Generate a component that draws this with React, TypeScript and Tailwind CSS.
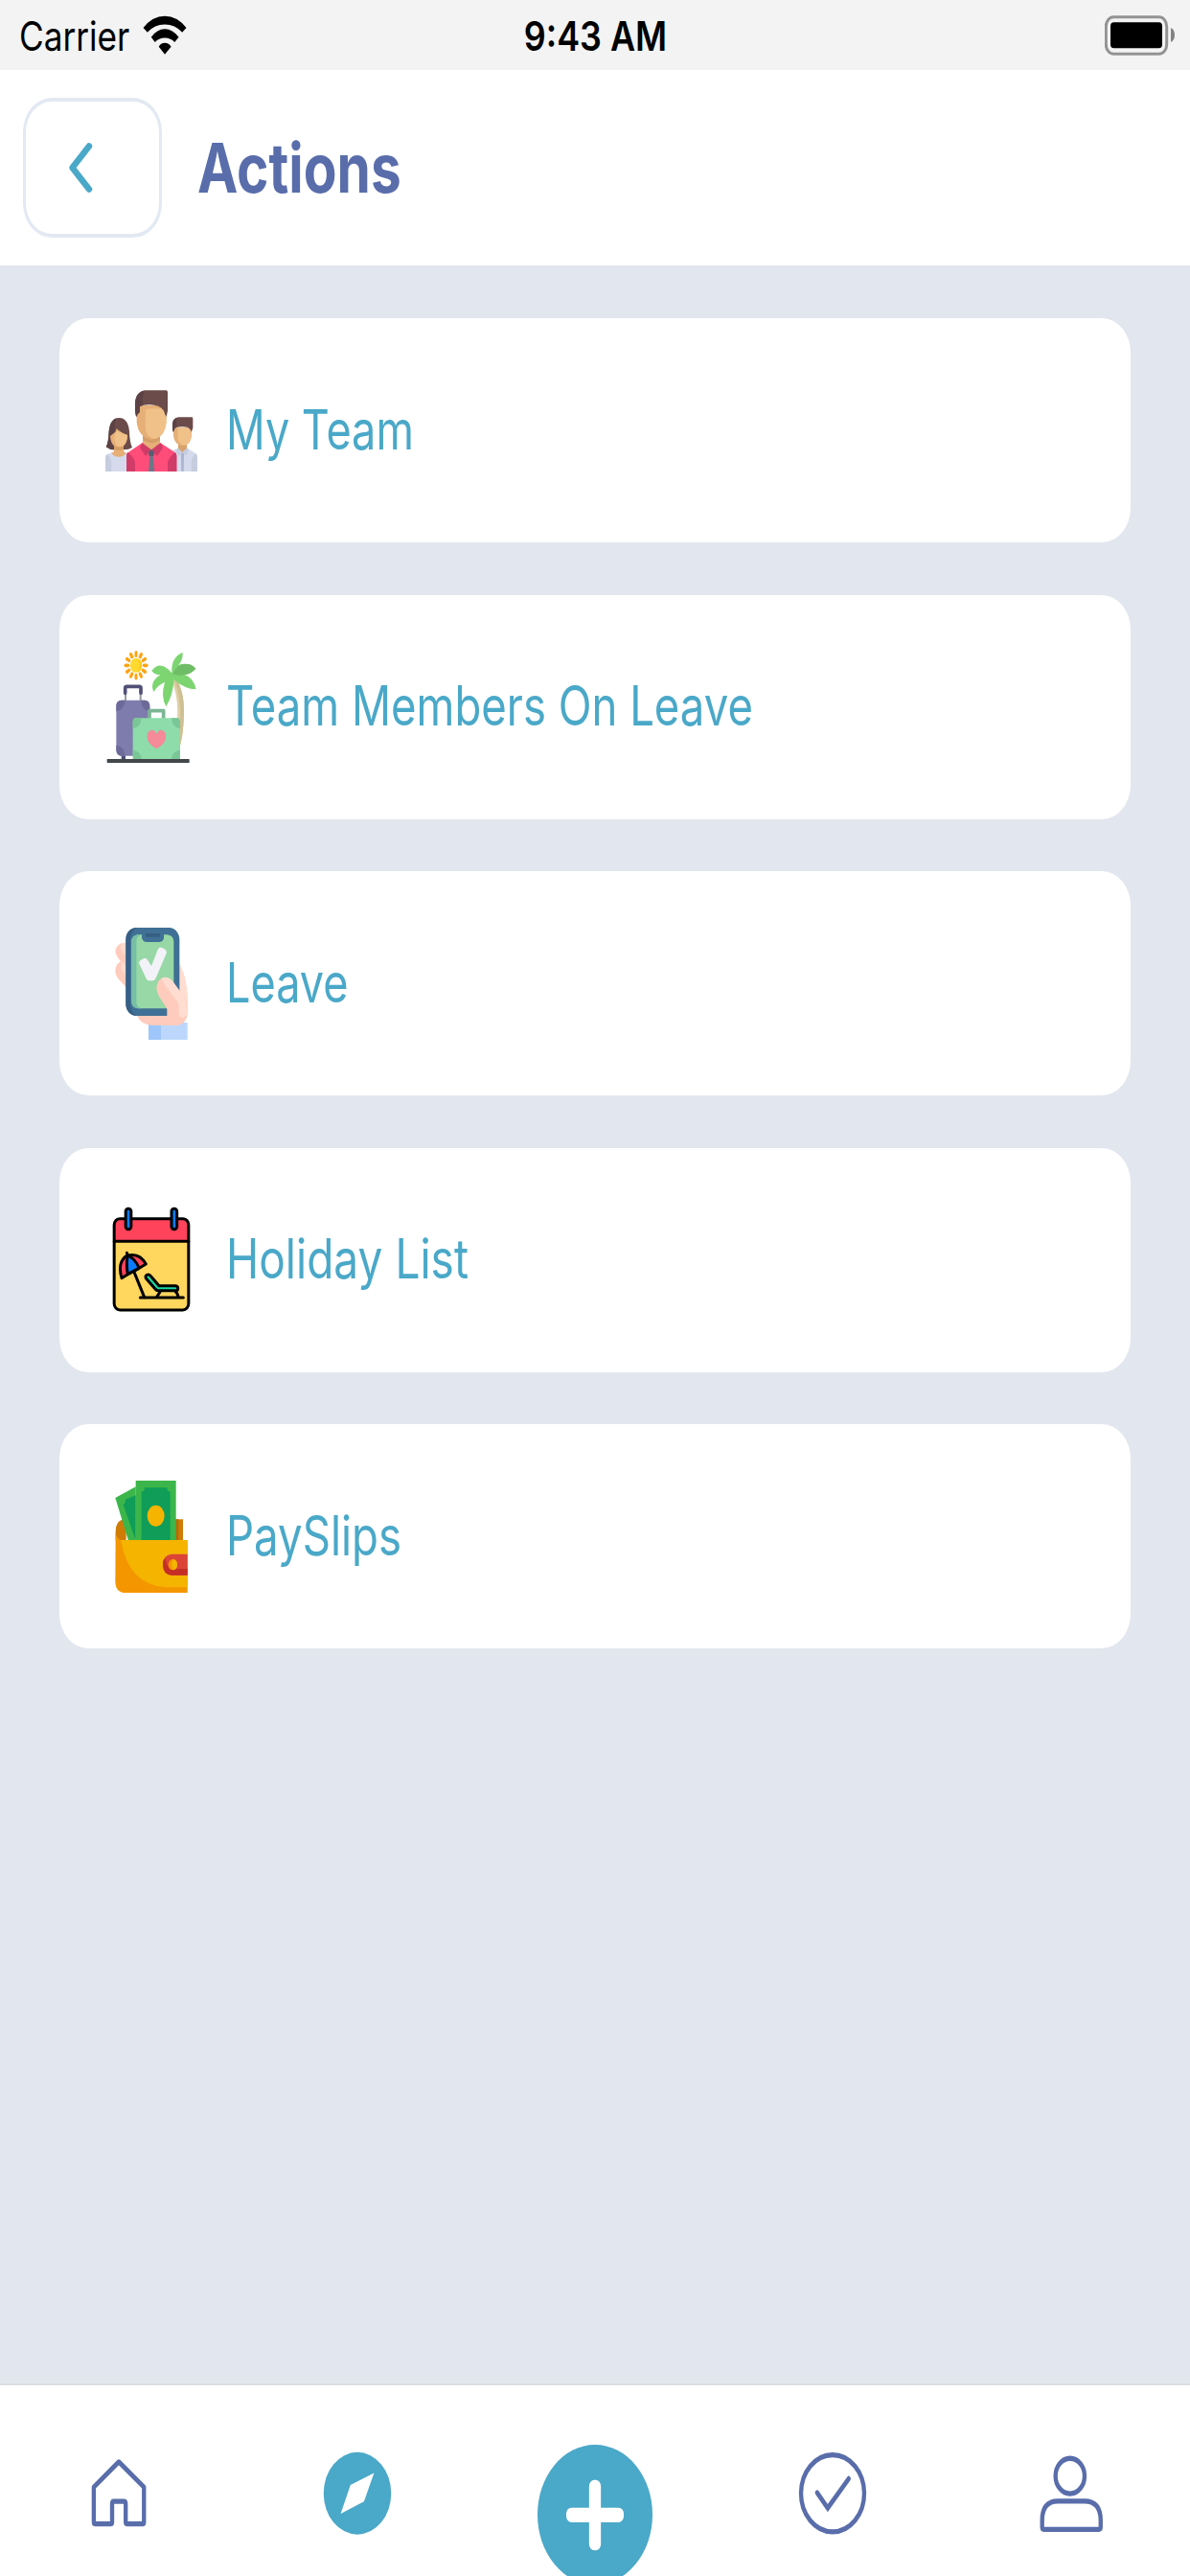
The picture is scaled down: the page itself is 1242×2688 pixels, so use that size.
import type { ReactNode } from 'react'

interface ActionItem {
  label: string
  icon: ReactNode
  labelClass: string
}

function WifiIcon() {
  return (
    <svg viewBox="447 45 138 124" className="h-[41px] w-[46px]" fill="#000">
      <path d="M448 84Q477 47 516 47T584 84L571 99Q548 74 516 74T461 99Z" />
      <path d="M473 114Q491 88 516 88T560 114L547 130Q535 116 516 116T485 130Z" />
      <path d="M497 144Q503 132 516 132T536 144L516 168Z" />
    </svg>
  )
}

function BatteryIcon() {
  return (
    <svg viewBox="0 0 74 42" className="h-[42px] w-[74px]">
      <rect x="1.3" y="1.7" width="63.4" height="38.6" rx="8" ry="10" fill="none" stroke="#939393" strokeWidth="3" />
      <rect x="6" y="7.3" width="54" height="27" rx="3.5" ry="4" fill="#000" />
      <path d="M69 13Q73 15 73 20.5T69 28Z" fill="#828282" />
    </svg>
  )
}

function TeamIcon() {
  return (
    <svg viewBox="180 212 288 351" className="h-[117px] w-24">
      {/* woman on the left */}
      <path d="M182 438Q190 424 191 388Q196 347 223 347Q250 347 255 388Q256 424 264 440Q251 448 237 447H208Q193 447 182 438Z" fill="#6b4c4a" />
      <path d="M182 438Q190 424 191 388Q195 354 215 348Q207 366 209 388L207 447Q193 447 182 438Z" fill="#5c4145" />
      <path d="M180 515V472Q181 462 190 459L207 454H240L262 462V515Z" fill="#d5dbed" />
      <path d="M180 515V472Q181 464 186 461Q199 474 199 492V515Z" fill="#c5cddf" />
      <path d="M207 430H237V452L245 458Q237 469 222 469T199 458L207 452Z" fill="#e5af77" />
      <path d="M207 430H237V445Q222 452 207 445Z" fill="#d59d67" />
      <path d="M195 404L210 392Q214 387 215 380Q226 392 249 401Q249 424 238 434Q222 444 206 434Q196 424 195 404Z" fill="#e5af77" />
      <path d="M208 408Q208 396 218 388Q230 395 249 401Q248 425 236 434Q224 440 215 433Q208 424 208 408Z" fill="#f0c188" />
      {/* man on the right */}
      <path d="M385 515V452L407 442H436L459 456Q468 462 468 472V515Z" fill="#d5dbed" />
      <path d="M449 515V487Q450 468 463 459Q468 464 468 472V515Z" fill="#c5cddf" />
      <path d="M408 425H435V445L421 456L408 445Z" fill="#d9a26c" />
      <path d="M407 441L421 455L410 466L400 452ZM436 441L421 455L432 466L441 449Z" fill="#c5cddf" />
      <path d="M417 458H426V467L425 515H418L417 467Z" fill="#a9b4d2" />
      <path d="M393 378H450V404Q446 433 422 435Q397 433 393 404Z" fill="#e5af77" />
      <path d="M407 378H449V405Q446 431 427 433Q409 431 407 410Z" fill="#f0c188" />
      <path d="M393 392Q389 384 390 367Q391 347 409 345H451Q454 345 454 350V379L449 392Q448 381 436 376Q418 372 400 378Q395 382 393 392Z" fill="#6b4c4a" />
      <path d="M393 392Q389 384 390 367Q391 351 403 347L402 375Q395 382 393 392Z" fill="#5c4145" />
      {/* man in the middle */}
      <path d="M246 515V465Q247 456 257 451L295 426H353L392 451Q402 456 403 465V515Z" fill="#ff4d7a" />
      <path d="M246 515V465Q247 456 251 455Q273 474 273 489V515ZM403 515V465Q402 458 398 455Q375 474 375 489V515Z" fill="#d13b68" />
      <path d="M297 400H351V431L324 450L297 431Z" fill="#e5af77" />
      <path d="M297 400H351V417Q325 434 297 417Z" fill="#d59d67" />
      <path d="M295 425L324 447L306 467L288 441ZM353 425L324 447L342 467L360 441Z" fill="#d13b68" />
      <path d="M324 446L332 454V464L329 467L334 515H315L319 467L316 463V454Z" fill="#6e7688" />
      <path d="M324 446L332 454V464L329 467H319L316 463V454Z" fill="#565d70" />
      <path d="M278 308H371V360Q366 410 325 415Q283 409 278 360Z" fill="#e5af77" />
      <path d="M305 325Q307 318 325 318H366L371 345Q371 407 333 413Q305 407 305 375Z" fill="#f0c188" />
      <path d="M277 344Q272 332 273 308Q272 266 305 261H370Q375 261 375 267V325L371 344Q366 337 363 325Q350 306 318 306Q298 306 288 312V328Q281 333 277 344Z" fill="#6b4c4a" />
      <path d="M277 344Q272 332 273 308Q272 266 303 262Q293 283 298 305L288 312V328Q281 333 277 344Z" fill="#5c4145" />
    </svg>
  )
}

const SUN_RAYS = [0, 30, 60, 90, 120, 150, 180, 210, 240, 270, 300, 330]

function VacationIcon() {
  return (
    <svg viewBox="60 58 288 351" className="h-[117px] w-24">
      <g transform="translate(156 104) scale(1 1.22)">
        {SUN_RAYS.map((deg) => (
          <path key={deg} d="M0 -25V-33" transform={`rotate(${deg})`} stroke="#fca311" strokeWidth="9" strokeLinecap="round" />
        ))}
        <circle r="18.5" fill="#ffd92e" />
        <path d="M6 -17.5A18.5 18.5 0 0 1 6 17.5Q15 0 6 -17.5Z" fill="#fccb22" />
      </g>
      {/* palm */}
      <path d="M268 150L282 146Q306 185 306 245Q306 310 294 355L282 300Q294 215 268 150Z" fill="#dfd0a5" />
      <path d="M277 150L282 146Q306 185 306 245Q306 310 294 355L291 330Q303 220 277 150Z" fill="#cfc093" />
      <path d="M268 128Q265 78 302 63Q303 88 289 103Q314 92 343 114Q329 131 308 133Q337 143 344 179Q310 179 275 149Q271 200 250 233Q232 200 246 157Q226 164 211 187Q197 155 232 134Q215 134 205 121Q232 85 268 128Z" fill="#7dd572" />
      <path d="M271 130Q288 91 325 101Q336 105 343 114Q326 131 307 133Q289 140 271 130Z" fill="#70bd67" />
      {/* suitcases */}
      <path d="M123 193V215M170 193V215" stroke="#9a9a9a" strokeWidth="6" />
      <path d="M122 191V175Q122 170 127 170H166Q171 170 171 175V191" fill="none" stroke="#515078" strokeWidth="11" strokeLinecap="round" strokeLinejoin="round" />
      <rect x="110" y="380" width="13" height="18" fill="#515078" />
      <rect x="94" y="213" width="105" height="174" rx="16" ry="19" fill="#7e7cad" />
      <path d="M94 248V232Q94 213 110 213H122Q120 243 94 248ZM171 213H183Q199 213 199 232V248Q174 244 171 213ZM94 354Q119 357 122 387H110Q94 387 94 368Z" fill="#6c6a99" />
      <path d="M198 270V246H242V270" fill="none" stroke="#7bb594" strokeWidth="11" strokeLinejoin="round" />
      <rect x="146" y="269" width="148" height="129" rx="10" ry="12" fill="#8ddcaa" />
      <path d="M146 302V281Q146 269 156 269H173Q171 298 146 302ZM267 269H284Q294 269 294 281V302Q269 299 267 269ZM146 369Q172 373 173 398H146ZM294 369V398H267Q268 373 294 369Z" fill="#7bc697" />
      <path d="M220 318Q212 302 200 308Q190 313 191 329Q192 350 220 365Q248 350 249 329Q250 313 240 308Q228 302 220 318Z" fill="#f58a99" />
      <rect x="65" y="397" width="258" height="12" rx="2" fill="#42474a" />
    </svg>
  )
}

function PhoneIcon() {
  return (
    <svg viewBox="60 53 288 351" className="h-[117px] w-24">
      <rect x="195" y="350" width="122" height="55" fill="#bcd7fb" />
      <rect x="195" y="350" width="39" height="55" fill="#9fc6fb" />
      <path d="M125 103Q113 97 101 107Q87 119 94 138Q98 148 108 159Q90 169 91 190Q92 203 102 215L125 240Z" fill="#ffcbbd" />
      <path d="M113 100Q103 107 107 120Q113 133 125 141V103ZM113 160Q104 172 111 186L125 206V170Z" fill="#ffd9cc" />
      <path d="M158 325Q170 358 210 359H285Q317 353 317 315V280Q316 210 292 168V325Z" fill="#ffcbbd" />
      <path d="M292 168Q316 210 317 290L292 260Z" fill="#ffddd0" />
      <rect x="124" y="53" width="168" height="276" rx="32" ry="38" fill="#407095" />
      <path d="M158 53Q124 57 124 91V291Q124 325 158 329Q138 318 138 288V94Q138 64 158 53Z" fill="#365f83" />
      <path d="M162 75H174V84Q176 98 190 98H229Q243 96 243 84V75H253Q274 77 274 98V306H162Q142 304 142 284V97Q142 77 162 75Z" fill="#97d8a6" />
      <path d="M162 75H174Q157 78 157 98V284Q157 304 174 306H162Q142 304 142 284V97Q142 77 162 75Z" fill="#77bea6" />
      <rect x="186" y="71" width="45" height="11" rx="4" fill="#365f83" />
      <path d="M166 166Q164 159 170 155L181 149Q187 147 191 153L204 173L225 120Q229 112 236 115L247 121Q253 125 251 133L217 213Q215 218 209 219H196Q191 219 188 213Z" fill="#f3f2f8" />
      <path d="M253 359V307L228 268Q213 241 226 221Q245 197 269 219L302 264Q317 290 317 319Q313 353 285 359Z" fill="#ffcbbd" />
      <path d="M236 212Q254 202 269 219L302 264Q317 290 317 319Q311 335 300 334Q287 332 290 304Q291 291 280 277L253 243Q243 228 236 212Z" fill="#ffddd0" />
    </svg>
  )
}

function HolidayIcon() {
  return (
    <svg viewBox="60 49 288 351" className="h-[117px] w-24">
      <rect x="87.500" y="96" width="233" height="286" rx="18" ry="20" fill="#ffd65e" />
      <path d="M87.500 167V116Q87.500 96 106 96H302Q320.500 96 320.500 116V167Z" fill="#ff435b" />
      <g fill="none" stroke="#000" strokeWidth="9" strokeLinecap="round" strokeLinejoin="round">
        <rect x="87.500" y="96" width="233" height="286" rx="18" ry="20" />
        <path d="M88 167H320" />
        <rect x="123.500" y="65" width="17" height="64" rx="8" fill="#0a7cff" />
        <rect x="267" y="65" width="17" height="64" rx="8" fill="#0a7cff" />
        <path d="M150 263L182 342" />
        <path d="M111 282Q102 251 110 232Q119 214 130 211Q167 202 187 238L157 256L130 270Z" fill="#ff435b" />
        <path d="M130 211Q155 222 165 251L130 270Q124 237 130 211Z" fill="#0a7cff" />
        <path d="M130 211L127 203" />
        <path d="M190 272Q198 269 203 277L228 306H280Q288 307 287 315Q287 321 280 321H225Q220 321 216 316L188 284Q183 276 190 272Z" fill="#19d9a3" />
        <path d="M231 325L221 341M279 324Q287 330 288 341" />
        <path d="M169 343H304" />
      </g>
    </svg>
  )
}

function WalletIcon() {
  return (
    <svg viewBox="60 44 288 351" className="h-[117px] w-24">
      <path d="M92 205Q92 165 125 165V232H92Z" fill="#cf7c06" />
      <rect x="278" y="165" width="25" height="68" fill="#cf7c06" />
      <rect x="278" y="165" width="11" height="68" fill="#b56a05" />
      <path d="M91 98L155 63V232H132Z" fill="#3cb64a" />
      <path d="M116 119Q125 113 122 103L155 90V232Z" fill="#0f9d58" />
      <rect x="155" y="44" width="126" height="189" fill="#3cb64a" />
      <path d="M173 79Q183 77 183 66H253Q253 77 263 79V233H173Z" fill="#0f9d58" />
      <ellipse cx="218" cy="154" rx="27" ry="33" fill="#f4b400" />
      <path d="M92 205Q97 231 115 232H317V395H123Q91 395 91 358Z" fill="#f39600" />
      <path d="M108 230H317V378H248Q132 370 108 230Z" fill="#f4b400" />
      <path d="M317 274V340H268Q240 337 240 307Q240 277 268 274Z" fill="#db4437" />
      <path d="M240 300V307Q240 337 268 340H317V320H278Q249 320 248 287Q240 292 240 300Z" fill="#c42e25" />
      <ellipse cx="271" cy="307" rx="14" ry="17" fill="#f39600" />
      <path d="M272 290Q285 292 285 307T272 324Q263 307 272 290Z" fill="#f4b400" />
    </svg>
  )
}

const ACTIONS: ActionItem[] = [
  { label: 'My Team', icon: <TeamIcon />, labelClass: 'scale-x-[0.79]' },
  { label: 'Team Members On Leave', icon: <VacationIcon />, labelClass: 'scale-x-[0.798]' },
  { label: 'Leave', icon: <PhoneIcon />, labelClass: 'scale-x-[0.79]' },
  { label: 'Holiday List', icon: <HolidayIcon />, labelClass: 'scale-x-[0.808]' },
  { label: 'PaySlips', icon: <WalletIcon />, labelClass: 'scale-x-[0.8]' },
]

function StatusBar() {
  return (
    <div className="grid h-[73px] grid-cols-3 items-center bg-[#f3f3f3] text-[42.500px] leading-none text-black">
      <div className="flex items-center pl-5">
        <span className="w-[129px] origin-left scale-x-[0.828] pt-[3px] whitespace-nowrap">Carrier</span>
        <WifiIcon />
      </div>
      <div className="flex justify-center">
        <span className="scale-x-[0.845] pt-[3px] font-semibold whitespace-nowrap">9:43 AM</span>
      </div>
      <div className="flex justify-end pr-[15px]">
        <BatteryIcon />
      </div>
    </div>
  )
}

function Header() {
  return (
    <header className="flex h-[204px] items-center bg-white pl-6">
      <button
        type="button"
        aria-label="Back"
        className="flex h-[146px] w-[145px] items-center rounded-[30px/36px] border-x-[3px] border-y-4 border-[#e3e9f2] pl-[43px]"
      >
        <svg viewBox="0 0 28 56" className="h-14 w-7" fill="none" stroke="#4aa8c8" strokeWidth="6.500" strokeLinecap="round" strokeLinejoin="round">
          <path d="M23 5.500L5.500 28L23 50.500" />
        </svg>
      </button>
      <h1 className="ml-[37px] origin-left scale-x-[0.8] text-[71px] leading-none font-bold whitespace-nowrap text-[#596dab]">
        Actions
      </h1>
    </header>
  )
}

function ActionCard({ label, icon, labelClass }: ActionItem) {
  return (
    <button type="button" className="flex h-[234px] items-center rounded-[30px/36px] bg-white pl-12">
      {icon}
      <span
        className={`ml-[30px] origin-left pb-0.5 text-[57px] leading-none whitespace-nowrap text-[#4aa8c8] ${labelClass}`}
      >
        {label}
      </span>
    </button>
  )
}

function TabIcon({ children }: { children: ReactNode }) {
  return (
    <svg
      viewBox="0 0 30 30"
      preserveAspectRatio="none"
      className="mt-[58px] h-[109.500px] w-[90px]"
      fill="none"
      stroke="#596dab"
      strokeWidth="1.450"
      strokeLinecap="round"
      strokeLinejoin="round"
    >
      {children}
    </svg>
  )
}

function TabBar() {
  return (
    <nav className="grid h-[201px] grid-cols-5 justify-items-center overflow-hidden border-t-2 border-[#dcdfe2] bg-white">
      <TabIcon>
        <path d="M6.300 13.200L15 6L23.750 13.200V23.200Q23.750 23.750 23.200 23.750H18Q17.400 23.750 17.400 23.200V18Q17.400 17.300 16.800 17.300H13.200Q12.670 17.300 12.670 18V23.200Q12.670 23.750 12.100 23.750H6.900Q6.300 23.750 6.300 23.200Z" />
      </TabIcon>
      <TabIcon>
        <circle cx="15" cy="15" r="11.750" fill="#4aa8c8" stroke="none" />
        <path d="M20.800 9.200L12.600 12.600L9.200 20.800L17.300 17.300Z" fill="#fff" stroke="none" />
      </TabIcon>
      <svg viewBox="0 0 40 40" preserveAspectRatio="none" className="mt-[62px] h-[146px] w-[120px]">
        <circle cx="20" cy="20" r="20" fill="#4aa8c8" />
        <rect x="10" y="18" width="20" height="4.200" rx="1.800" fill="#fff" />
        <rect x="17.950" y="10.100" width="4.100" height="20.100" rx="1.800" fill="#fff" />
      </svg>
      <TabIcon>
        <circle cx="15" cy="15" r="11" />
        <path d="M9.600 14.800L13.300 19.200L20.600 10.800" strokeLinejoin="miter" />
      </TabIcon>
      <TabIcon>
        <circle cx="14.600" cy="10.050" r="5.050" />
        <path d="M4.900 22.700Q4.900 17.200 10.400 17.200H19.600Q25.250 17.200 25.250 22.700V24.600Q25.250 25.300 24.600 25.300H5.500Q4.900 25.300 4.900 24.600Z" />
      </TabIcon>
    </nav>
  )
}

export default function App() {
  return (
    <div className="flex h-[2688px] w-[1242px] flex-col overflow-hidden bg-[#e2e6ee] font-['Inter',sans-serif]">
      <StatusBar />
      <Header />
      <main className="flex flex-1 flex-col gap-[54.500px] px-[62px] pt-[55px]">
        {ACTIONS.map((action) => (
          <ActionCard key={action.label} {...action} />
        ))}
      </main>
      <TabBar />
    </div>
  )
}
